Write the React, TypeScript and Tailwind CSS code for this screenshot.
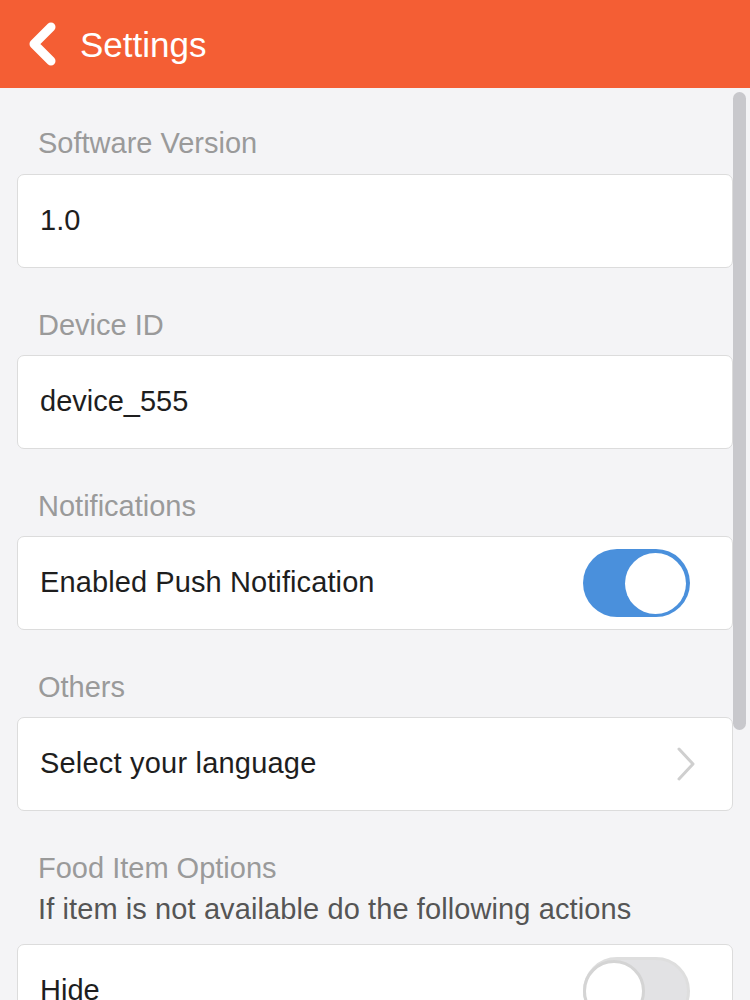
import React from "react";

function Label({ children }: { children: React.ReactNode }) {
  return <div className="text-[29px] leading-[30px] text-[#9a9a9a] pl-[21px]">{children}</div>;
}

function Card({ children }: { children: React.ReactNode }) {
  return (
    <div className="h-[94px] bg-white border border-[#dcdcdc] rounded-[7px] flex items-center pl-[22px] pr-[42px] text-[29px] text-[#1e1e1e]">
      {children}
    </div>
  );
}

function Toggle({ on }: { on: boolean }) {
  return on ? (
    <div className="w-[107px] h-[68px] rounded-full bg-[#4a90dc] flex items-center justify-end pr-[4px]">
      <div className="w-[61px] h-[61px] rounded-full bg-white" />
    </div>
  ) : (
    <div className="w-[107px] h-[68px] rounded-full bg-[#e2e2e4] border-[3px] border-[#dedede] flex items-center">
      <div className="w-[62px] h-[62px] rounded-full bg-white border-[3px] border-[#d4d4d4] -ml-[3px]" />
    </div>
  );
}

export default function App() {
  return (
    <div
      className="relative w-[750px] h-[1000px] overflow-hidden bg-[#f4f4f6]"
      style={{ fontFamily: '"Liberation Sans", Arial, sans-serif' }}
    >
      <div className="h-[88px] bg-[#f45e34] flex items-center pl-[27px]">
        <svg width="30" height="44" viewBox="0 0 30 44" className="shrink-0">
          <path d="M24 5 L7 22 L24 39" fill="none" stroke="white" strokeWidth="9" strokeLinecap="round" strokeLinejoin="round" />
        </svg>
        <span className="ml-[23px] text-[35px] text-white leading-none">Settings</span>
      </div>

      <div className="px-[17px] pt-[40px]">
        <Label>Software Version</Label>
        <div className="mt-[16px]">
          <Card>1.0</Card>
        </div>

        <div className="mt-[42px]">
          <Label>Device ID</Label>
        </div>
        <div className="mt-[15px]">
          <Card>device_555</Card>
        </div>

        <div className="mt-[42px]">
          <Label>Notifications</Label>
        </div>
        <div className="mt-[15px]">
          <Card>
            <span className="flex-1 tracking-[0.1px]">Enabled Push Notification</span>
            <Toggle on />
          </Card>
        </div>

        <div className="mt-[42px]">
          <Label>Others</Label>
        </div>
        <div className="mt-[15px]">
          <Card>
            <span className="flex-1 tracking-[0.2px]">Select your language</span>
            <svg width="20" height="34" viewBox="0 0 20 34" className="mr-[-6px]">
              <path d="M3 2 L17 17 L3 32" fill="none" stroke="#cfcfcf" strokeWidth="3" strokeLinecap="round" strokeLinejoin="round" />
            </svg>
          </Card>
        </div>

        <div className="mt-[42px]">
          <Label>Food Item Options</Label>
        </div>
        <div className="mt-[11px] text-[29px] leading-[30px] text-[#555] pl-[21px] tracking-[0.1px]">
          If item is not available do the following actions
        </div>
        <div className="mt-[20px]">
          <Card>
            <span className="flex-1">Hide</span>
            <Toggle on={false} />
          </Card>
        </div>
      </div>

      <div className="absolute left-[733px] top-[92px] w-[13px] h-[638px] rounded-full bg-[#c8c8cc]" />
    </div>
  );
}
